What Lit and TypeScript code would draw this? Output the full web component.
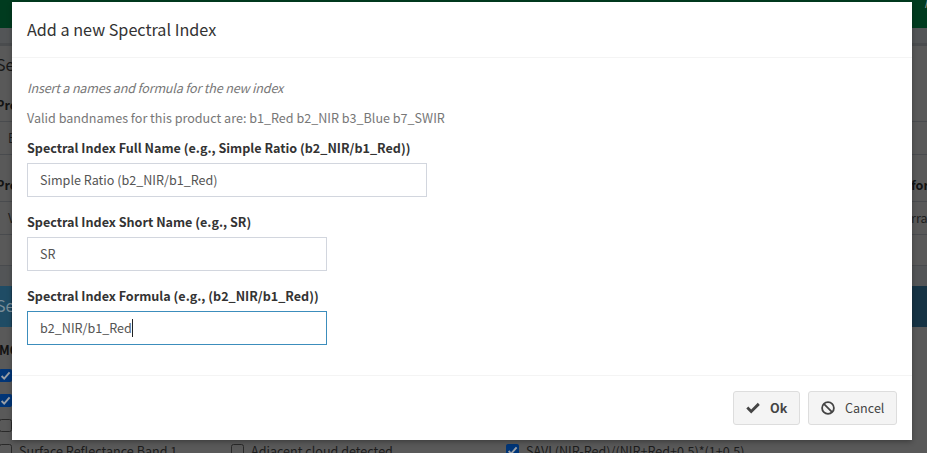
import { LitElement, html, css, svg } from "lit";
import { customElement, property } from "lit/decorators.js";

const tick = svg`<path d="M2.6 7 L5.2 9.6 L10.6 3.4" fill="none" stroke="#999fa6" stroke-width="1.9"/>`;

@customElement("check-item")
class CheckItem extends LitElement {
  @property({ type: Boolean }) checked = false;
  @property() label = "";

  static styles = css`
    :host { display: flex; align-items: center; height: 25px; white-space: nowrap; }
    svg { width: 13px; height: 13px; flex: none; margin-right: 7px; overflow: visible; }
    span { margin-top: -1px; }
  `;

  render() {
    return html`<svg viewBox="0 0 13 13">
        ${this.checked
          ? svg`<rect width="13" height="13" rx="2" fill="#003577"/>${tick}`
          : svg`<rect x=".5" y=".5" width="12" height="12" rx="2" fill="#595959" stroke="#292929"/>`}
      </svg><span>${this.label}</span>`;
  }
}

@customElement("form-field")
class FormField extends LitElement {
  @property() label = "";
  @property() value = "";
  @property({ type: Boolean, reflect: true }) wide = false;
  @property({ type: Boolean, reflect: true }) active = false;

  static styles = css`
    :host { display: block; height: 74px; }
    .label { height: 30px; line-height: 30px; font-weight: 700; color: #333; white-space: nowrap; }
    .box {
      box-sizing: border-box; width: 300px; height: 34px; padding: 0 12px;
      border: 1px solid #d2d6de; display: flex; align-items: center; color: #555;
    }
    :host([wide]) .box { width: 400px; }
    :host([active]) .box { border-color: #3c8dbc; }
    .box span { line-height: 18px; }
    .caret { width: 1px; height: 18px; background: #222; }
  `;

  render() {
    return html`<div class="label">${this.label}</div>
      <div class="box"><span>${this.value}</span>${this.active ? html`<i class="caret"></i>` : ""}</div>`;
  }
}

@customElement("app-root")
class AppRoot extends LitElement {
  static styles = css`
    :host {
      display: block; position: relative; width: 927px; height: 453px; overflow: hidden;
      background: #595959; font: 12.59px "Noto Sans CJK SC", "Noto Sans", sans-serif; color: #121212;
    }
    .page { display: flex; flex-direction: column; height: 453px; overflow: hidden; }
    .page > * { flex: none; box-sizing: border-box; white-space: nowrap; }
    .top { height: 28px; background: #003b1f; display: flex; justify-content: flex-end; overflow: hidden; }
    .top span { color: #8b938f; font-style: italic; line-height: 6px; margin-right: -7px; }
    .strip { height: 15px; background: #535557; }
    .strip.tall { height: 20px; }
    .rule { height: 3px; background: #4a4c4e; }
    .title { height: 43px; line-height: 36px; font-size: 16.1px; margin-left: -4px; color: #181818; }
    .caption { height: 32px; line-height: 32px; font-weight: 700; margin-left: -4px; display: flex; justify-content: space-between; }
    .select { height: 34px; border: solid #494b4e; border-width: 1px 0; padding-left: 8px; line-height: 32px; display: flex; justify-content: space-between; color: #1e1e1e; }
    .gap { height: 14px; }
    .end { height: 31px; border-bottom: 1px solid #494b4e; }
    .clip { width: 16px; overflow: visible; }
    .blue { height: 41px; line-height: 39px; background: linear-gradient(90deg, #1f4c65 11px, #163344 12px); color: #7a8e99; font-size: 16.1px; text-indent: -4px; }
    .group { height: 36px; line-height: 45px; font-weight: 700; text-indent: -1px; }
    .checks { display: grid; grid-template-columns: 232px 275px 1fr; margin-left: -1px; color: #1c1c1c; }

    .dialog {
      position: absolute; left: 12px; top: 2px; width: 900px; height: 438px; box-sizing: border-box;
      background: #fff; box-shadow: 0 2px 5px rgba(0, 0, 0, .3); display: flex; flex-direction: column;
    }
    .head { height: 56px; padding-left: 15px; line-height: 54px; font-size: 16.18px; color: #333; border-bottom: 1px solid #f4f4f4; box-sizing: border-box; }
    .body { flex: 1; padding: 15px 15px 0; color: #777; }
    .body p { margin: 0; height: 30px; line-height: 30px; white-space: nowrap; }
    .body .hint { font-style: italic; letter-spacing: -0.185px; }
    .foot { height: 65px; box-sizing: border-box; border-top: 1px solid #f4f4f4; padding: 15px 15px 0; display: flex; justify-content: flex-end; gap: 8px; }
    .btn {
      height: 34px; box-sizing: border-box; border: 1px solid #ddd; border-radius: 3px; background: #f4f4f4;
      color: #444; display: flex; align-items: center; padding: 0 12px;
    }
    .btn span { padding-bottom: 2px; }
    .ok { width: 67px; font-weight: 700; }
    .cancel { width: 89px; }
    .btn svg { width: 14px; height: 14px; flex: none; margin-right: 10px; }
  `;

  render() {
    return html`
      <div class="page">
        <div class="top"><span>M</span></div>
        <div class="strip"></div>
        <div class="rule"></div>
        <div class="title">Se</div>
        <div class="caption"><span class="clip">Pro</span></div>
        <div class="select"><span>E</span></div>
        <div class="gap"></div>
        <div class="caption"><span class="clip">Pro</span><span class="clip">for</span></div>
        <div class="select"><span>V</span><span class="clip">rra</span></div>
        <div class="end"></div>
        <div class="strip tall"></div>
        <div class="blue">Se</div>
        <div class="group">MO</div>
        <div class="checks">
          <check-item checked></check-item><span></span><span></span>
          <check-item checked></check-item><span></span><span></span>
          <check-item></check-item><span></span><span></span>
          <check-item label="Surface Reflectance Band 1"></check-item>
          <check-item label="Adjacent cloud detected"></check-item>
          <check-item checked label="SAVI (NIR-Red)/(NIR+Red+0.5)*(1+0.5)"></check-item>
        </div>
      </div>
      <div class="dialog">
        <div class="head">Add a new Spectral Index</div>
        <div class="body">
          <p class="hint">Insert a names and formula for the new index</p>
          <p>Valid bandnames for this product are: b1_Red b2_NIR b3_Blue b7_SWIR</p>
          <form-field wide label="Spectral Index Full Name (e.g., Simple Ratio (b2_NIR/b1_Red))" value="Simple Ratio (b2_NIR/b1_Red)"></form-field>
          <form-field label="Spectral Index Short Name (e.g., SR)" value="SR"></form-field>
          <form-field active label="Spectral Index Formula (e.g., (b2_NIR/b1_Red))" value="b2_NIR/b1_Red"></form-field>
        </div>
        <div class="foot">
          <div class="btn ok">
            <svg viewBox="0 0 14 14"><path d="M0.3 7.6 L2.3 5.5 L5.2 8.4 L11.8 1.8 L13.8 3.9 L5.2 12.4 Z" fill="#444"/></svg>
            <span>Ok</span>
          </div>
          <div class="btn cancel">
            <svg viewBox="0 0 14 14"><g fill="none" stroke="#444" stroke-width="1.8"><circle cx="7" cy="7" r="5.9"/><path d="M2.9 2.9 L11.1 11.1"/></g></svg>
            <span>Cancel</span>
          </div>
        </div>
      </div>`;
  }
}
